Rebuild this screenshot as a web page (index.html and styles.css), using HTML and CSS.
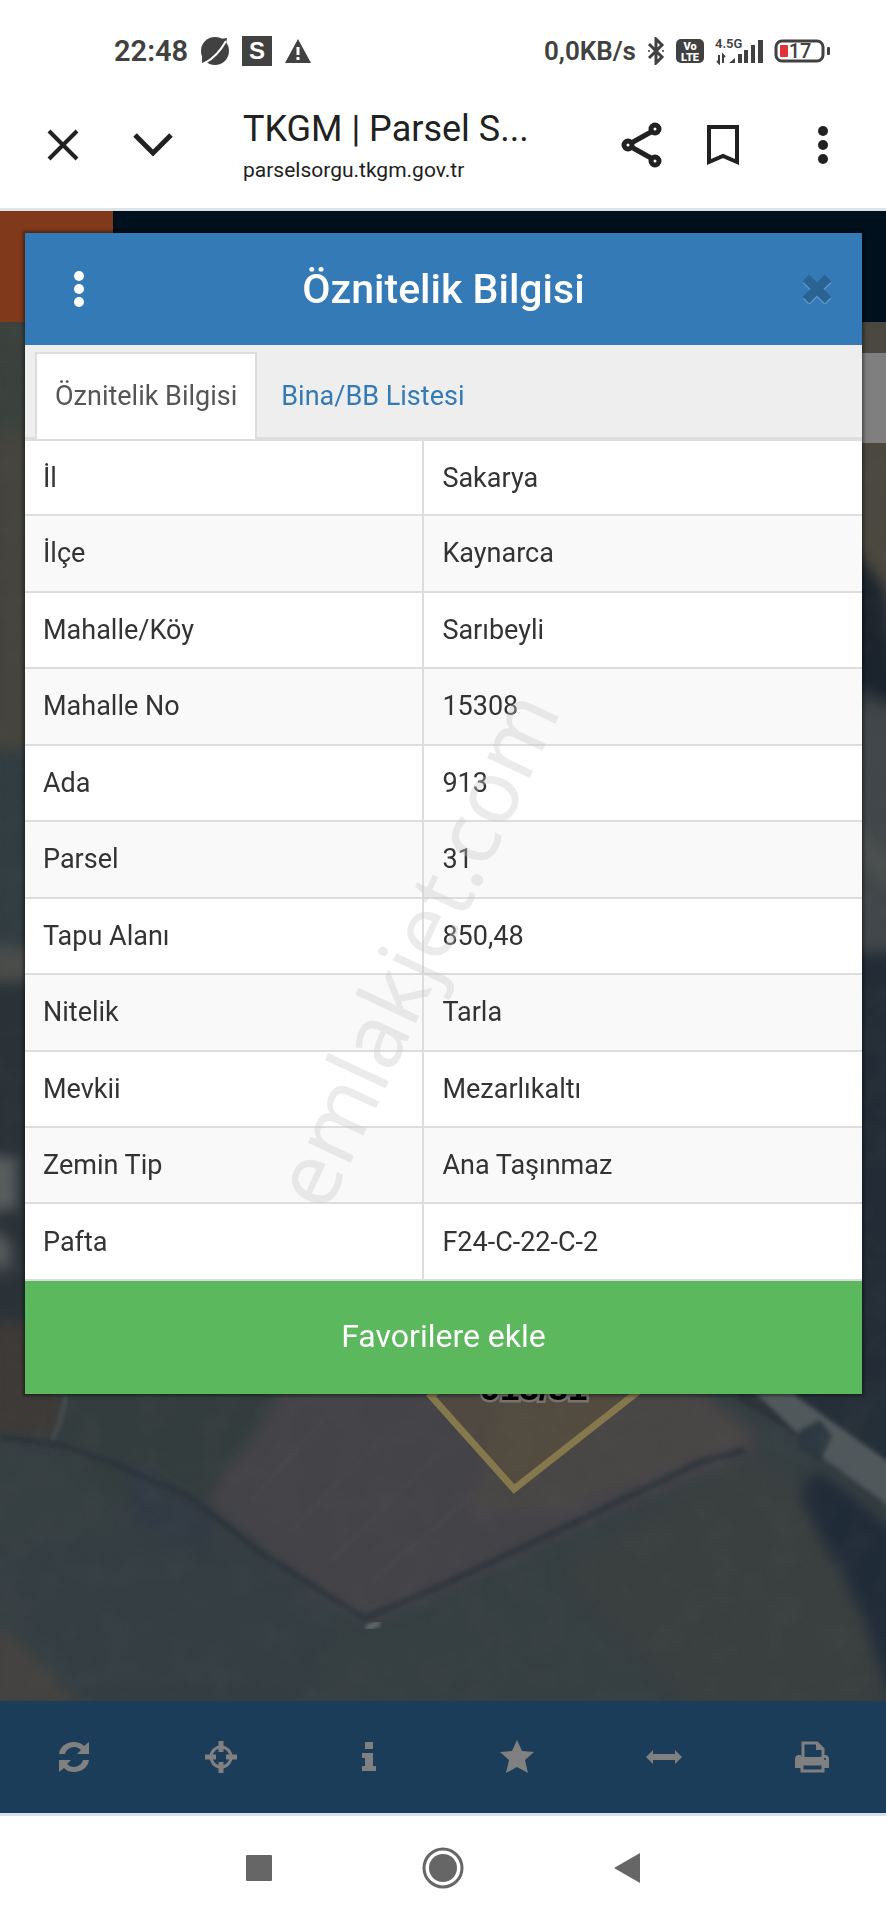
FILE: index.html
```html
<!DOCTYPE html>
<html lang="tr">
<head>
  <meta charset="UTF-8">
  <meta name="viewport" content="width=device-width, initial-scale=1">
  <title>TKGM | Parsel Sorgu</title>
  <link rel="stylesheet" href="styles.css">
</head>
<body>

  <div class="status-bar">
    <div class="status-left">
      <span class="clock">22:48</span>
      <svg width="30" height="30" viewBox="0 0 30 30">
        <circle cx="15" cy="15" r="14" fill="#414141"/>
        <path d="M20 3 27 2 26 9z" fill="#414141"/>
        <path d="M2 20 2 27 8 24z" fill="#414141"/>
        <path d="M5 27C14 22 21 14 26 5" fill="none" stroke="#fff" stroke-width="2"/>
      </svg>
      <svg width="30" height="30" viewBox="0 0 30 30">
        <rect width="30" height="30" fill="#414141"/>
        <text class="app-letter" x="15" y="23" text-anchor="middle">S</text>
      </svg>
      <svg width="28" height="26" viewBox="0 0 28 26">
        <path d="M14 1 27 25H1z" fill="#414141"/>
        <path d="M14 9v8M14 19v3" stroke="#fff" stroke-width="3"/>
      </svg>
    </div>
    <div class="status-right">
      <span class="speed">0,0KB/s</span>
      <svg width="18" height="28" viewBox="0 0 18 28">
        <path d="M2 7 15 20 9 26V2l6 6L2 21" fill="none" stroke="#414141" stroke-width="3"/>
        <circle cx="2" cy="14" r="1" fill="#414141"/>
        <circle cx="16" cy="14" r="1" fill="#414141"/>
      </svg>
      <svg width="28" height="24" viewBox="0 0 28 24">
        <rect width="28" height="24" rx="5" fill="#414141"/>
        <text class="volte" x="14" y="11" text-anchor="middle">Vo</text>
        <text class="volte" x="14" y="22" text-anchor="middle">LTE</text>
      </svg>
      <svg width="48" height="28" viewBox="0 0 48 28">
        <text class="network" x="0" y="11">4.5G</text>
        <path d="M4 18v8l-2-2M8 26v-8l2 2" fill="none" stroke="#414141" stroke-width="2"/>
        <path d="M14 26l6-5v5zM23 17h4v9h-4zM29 13h4v13h-4zM36 8h4v18h-4zM43 3h5v23h-5z" fill="#414141"/>
      </svg>
      <svg width="56" height="24" viewBox="0 0 56 24">
        <rect x="2" y="2" width="47" height="20" rx="6" fill="none" stroke="#414141" stroke-width="3"/>
        <rect x="53" y="8" width="3" height="8" rx="1" fill="#414141"/>
        <rect x="6" y="6" width="8" height="12" rx="1" fill="#e2323a"/>
        <text class="battery" x="26" y="19" text-anchor="middle">17</text>
      </svg>
    </div>
  </div>

  <header class="browser-bar">
    <button type="button" class="icon-btn" aria-label="Kapat">
      <svg width="32" height="32" viewBox="0 0 32 32"><path d="M2 2 30 30M30 2 2 30" stroke="#212121" stroke-width="4"/></svg>
    </button>
    <button type="button" class="icon-btn chevron" aria-label="Küçült">
      <svg width="40" height="24" viewBox="0 0 40 24"><path d="M2 2 20 20 38 2" fill="none" stroke="#212121" stroke-width="5"/></svg>
    </button>
    <div class="page-info">
      <div class="page-title">TKGM | Parsel S...</div>
      <div class="page-url">parselsorgu.tkgm.gov.tr</div>
    </div>
    <button type="button" class="icon-btn share" aria-label="Paylaş">
      <svg width="42" height="46" viewBox="0 0 42 46" fill="none" stroke="#212121" stroke-width="5">
        <path d="M12 20 30 10M12 26 30 36"/>
        <circle cx="7" cy="23" r="4"/><circle cx="34" cy="7" r="4"/><circle cx="34" cy="39" r="4"/>
      </svg>
    </button>
    <button type="button" class="icon-btn bookmark" aria-label="Yer işareti">
      <svg width="32" height="42" viewBox="0 0 32 42"><path d="M2 3H30V38L16 32 2 38z" fill="none" stroke="#212121" stroke-width="4"/></svg>
    </button>
    <button type="button" class="icon-btn" aria-label="Menü">
      <svg width="10" height="38" viewBox="0 0 10 38" fill="#212121"><circle cx="5" cy="5" r="5"/><circle cx="5" cy="19" r="5"/><circle cx="5" cy="33" r="5"/></svg>
    </button>
  </header>

  <main class="page">
    <div class="backdrop">
      <div class="site-header"><div class="site-logo"></div></div>
      <svg class="map" viewBox="0 0 886 1379" preserveAspectRatio="xMidYMin slice">
        <defs>
          <filter id="soft" x="-10%" y="-10%" width="120%" height="120%" color-interpolation-filters="sRGB"><feGaussianBlur stdDeviation="7"/></filter>
          <filter id="edge" x="-10%" y="-10%" width="120%" height="120%" color-interpolation-filters="sRGB"><feGaussianBlur stdDeviation="2"/></filter>
          <filter id="grain" x="0" y="0" width="100%" height="100%" color-interpolation-filters="sRGB">
            <feTurbulence type="fractalNoise" baseFrequency="0.03" numOctaves="4" seed="8"/>
            <feColorMatrix values="0 0 0 0 0.4  0 0 0 0 0.4  0 0 0 0 0.4  1 0 0 0 -0.4"/>
          </filter>
        </defs>
        <rect width="886" height="1379" fill="#363f42"/>

        <!-- left edge -->
        <g filter="url(#soft)">
          <path d="M-10-10H40V120H-10z" fill="#3b423e"/>
          <path d="M-10 110H40V428H-10z" fill="#45443e"/>
          <path d="M-10 428H40V625H-10z" fill="#313d41"/>
          <path d="M-10 625H40V660H-10z" fill="#4b4d4b"/>
          <path d="M-10 660H40V1080H-10z" fill="#2a3237"/>
          <path d="M-10 835H16V888H-10z" fill="#5b5f60"/>
          <path d="M-10 905 10 920V950L-10 940z" fill="#5a5d5e"/>
          <path d="M-10 1000H70L62 1090 52 1116-10 1110z" fill="#3d3a38"/>
        </g>
        <!-- right edge -->
        <g filter="url(#soft)">
          <path d="M850-10H900V300H850z" fill="#4a483f"/>
          <path d="M850 220 886 270 900 390 850 360z" fill="#1b232c"/>
          <path d="M850 390 900 380V640H850z" fill="#41474a"/>
          <path d="M850 500 900 540V580L850 530z" fill="#4c4f4e"/>
          <path d="M850 630H900V1150L850 1100z" fill="#232c36"/>
        </g>

        <!-- fields -->
        <g filter="url(#soft)">
          <path d="M66 1070H300L215 1170 200 1260 60 1120z" fill="#343d3e"/>
          <path d="M290 1060H690L760 1130 600 1195 443 1270 372 1298 330 1280 205 1180z" fill="#444348"/>
          <path d="M500 1072H700L760 1115 560 1190 470 1190z" fill="#494646"/>
          <path d="M740 1135 840 1180 886 1340V1380H690L560 1250z" fill="#3a4040"/>
          <path d="M0 1240C120 1220 200 1190 330 1290L300 1379H80z" fill="#343e43"/>
          <path d="M130 1135 215 1195 205 1240 130 1200z" fill="#323b44"/>
          <path d="M-10 1300 20 1320 85 1390H-10z" fill="#444341"/>
        </g>
        <!-- furrows -->
        <g filter="url(#edge)" fill="none" stroke="#514d4f" stroke-width="3" opacity=".4">
          <path d="M250 1180 330 1090M290 1210 400 1100M330 1240 440 1130M370 1260 500 1150"/>
        </g>
        <!-- ditches -->
        <g filter="url(#edge)" fill="none" stroke="#2b3339" stroke-width="6">
          <path d="M0 1115 60 1123 110 1140 190 1175 260 1230 335 1278 365 1296 443 1263 580 1198 700 1140 745 1128" opacity=".8"/>
          <path d="M740 1072 790 1100 886 1175" stroke-width="14"/>
        </g>
        <path d="M66 1074 60 1100 52 1118" fill="none" stroke="#4f5655" stroke-width="3" filter="url(#edge)"/>
        <path d="M366 1306 380 1301" stroke="#74787b" stroke-width="4" filter="url(#edge)"/>
        <!-- road -->
        <g filter="url(#edge)">
          <path d="M745 1060H790L896 1142V1190L820 1134z" fill="#50585b"/>
          <path d="M800 1108 820 1098 832 1114 820 1140 796 1124z" fill="#2d3840"/>
          <path d="M796 1074 900 1148V1060H796z" fill="#252f38"/>
        </g>
        <path d="M806 1158 822 1150 896 1210V1390L862 1290 800 1175z" fill="#202b38" filter="url(#soft)"/>

        <rect width="886" height="1379" filter="url(#grain)" opacity=".2"/>

        <!-- selected parcel -->
        <path d="M431 1074 514 1167 635 1072 540 980z" fill="#8a6a28" fill-opacity=".16" stroke="#85784c" stroke-width="7"/>
        <text class="parcel-label" x="534" y="1078" text-anchor="middle">913/31</text>
        <rect x="846" y="31" width="40" height="90" fill="#7f7f7f"/>
      </svg>
    </div>

    <section class="dialog" role="dialog" aria-labelledby="dialog-title">
      <div class="dialog-header">
        <button type="button" class="icon-btn dialog-menu" aria-label="Seçenekler">
          <svg width="12" height="38" viewBox="0 0 12 38" fill="#fff"><circle cx="6" cy="6" r="5"/><circle cx="6" cy="19" r="5"/><circle cx="6" cy="32" r="5"/></svg>
        </button>
        <h1 id="dialog-title" class="dialog-title">Öznitelik Bilgisi</h1>
        <button type="button" class="icon-btn dialog-close" aria-label="Kapat">
          <svg width="30" height="30" viewBox="0 0 30 30" fill="none" stroke-width="9">
            <path d="M4 6 26 28M26 6 4 28" stroke="#5c95c7"/>
            <path d="M4 4 26 26M26 4 4 26" stroke="#2a6292"/>
          </svg>
        </button>
      </div>

      <nav class="tabs">
        <a href="#oznitelik" class="tab active">Öznitelik Bilgisi</a>
        <a href="#bina" class="tab">Bina/BB Listesi</a>
      </nav>

      <table class="attributes" id="oznitelik">
        <tbody>
          <tr><th scope="row">İl</th><td>Sakarya</td></tr>
          <tr><th scope="row">İlçe</th><td>Kaynarca</td></tr>
          <tr><th scope="row">Mahalle/Köy</th><td>Sarıbeyli</td></tr>
          <tr><th scope="row">Mahalle No</th><td>15308</td></tr>
          <tr><th scope="row">Ada</th><td>913</td></tr>
          <tr><th scope="row">Parsel</th><td>31</td></tr>
          <tr><th scope="row">Tapu Alanı</th><td>850,48</td></tr>
          <tr><th scope="row">Nitelik</th><td>Tarla</td></tr>
          <tr><th scope="row">Mevkii</th><td>Mezarlıkaltı</td></tr>
          <tr><th scope="row">Zemin Tip</th><td>Ana Taşınmaz</td></tr>
          <tr><th scope="row">Pafta</th><td>F24-C-22-C-2</td></tr>
        </tbody>
      </table>

      <button type="button" class="favorite-btn">Favorilere ekle</button>
      <div class="watermark"><span>emlakjet.com</span></div>
    </section>
  </main>

  <nav class="map-tools">
    <button type="button" class="icon-btn" aria-label="Yenile">
      <svg width="32" height="32" viewBox="0 0 32 32" fill="#808080">
        <path d="M1 13C2 5 9 1 16 1c4 0 7 1 10 4l5-4v12H19l4-4c-2-2-4-3-7-3-4 0-8 3-9 7z"/>
        <path d="M31 19c-1 8-8 12-15 12-4 0-7-1-10-4l-5 4V19h12l-4 4c2 2 4 3 7 3 4 0 8-3 9-7z"/>
      </svg>
    </button>
    <button type="button" class="icon-btn" aria-label="Konumum">
      <svg width="32" height="32" viewBox="0 0 32 32" fill="none" stroke="#808080">
        <circle cx="16" cy="16" r="10" stroke-width="3"/>
        <path d="M16 0v11M16 21v11M0 16h11M21 16h11" stroke-width="5"/>
      </svg>
    </button>
    <button type="button" class="icon-btn" aria-label="Bilgi">
      <svg width="32" height="32" viewBox="0 0 32 32" fill="#808080"><path d="M12 1h8v7h-8zM9 12h11v13h3v5H9v-5h3v-8H9z"/></svg>
    </button>
    <button type="button" class="icon-btn" aria-label="Favoriler">
      <svg width="34" height="34" viewBox="0 0 34 34" fill="#808080"><path d="M17 0l5 11 12 1-9 8 3 13-11-6-11 6 3-13-9-8 12-1z"/></svg>
    </button>
    <button type="button" class="icon-btn" aria-label="Ölçüm">
      <svg width="36" height="32" viewBox="0 0 36 32" fill="#808080"><path d="M0 16 7 9v4h22V9l7 7-7 7v-4H7v4z"/></svg>
    </button>
    <button type="button" class="icon-btn" aria-label="Yazdır">
      <svg width="34" height="32" viewBox="0 0 34 32">
        <path d="M8 17V2h14l6 6v9" fill="none" stroke="#808080" stroke-width="3"/>
        <path d="M21 2v7h7z" fill="#808080"/>
        <path d="M0 27V18q0-4 4-4h2v2h22v-2h2q4 0 4 4v9h-5v-4H6v4z" fill="#808080"/>
        <rect x="7" y="23" width="21" height="7" fill="#1b3d5a" stroke="#808080" stroke-width="3"/>
        <circle cx="30" cy="18" r="1" fill="#1b3d5a"/>
      </svg>
    </button>
  </nav>

  <div class="system-nav">
    <button type="button" class="icon-btn" aria-label="Son uygulamalar">
      <svg width="26" height="26" viewBox="0 0 26 26"><rect width="26" height="26" rx="1" fill="#666"/></svg>
    </button>
    <button type="button" class="icon-btn" aria-label="Ana ekran">
      <svg width="42" height="42" viewBox="0 0 42 42"><circle cx="21" cy="21" r="19" fill="none" stroke="#666" stroke-width="3"/><circle cx="21" cy="21" r="14" fill="#666"/></svg>
    </button>
    <button type="button" class="icon-btn" aria-label="Geri">
      <svg width="26" height="30" viewBox="0 0 26 30"><path d="M0 15 26 0V30z" fill="#666"/></svg>
    </button>
  </div>

</body>
</html>
```

FILE: styles.css
```css
* {
  box-sizing: border-box;
}
body {
  margin: 0;
  min-height: 100vh;
  display: flex;
  flex-direction: column;
  background: #fff;
  color: #333;
  font-family: Roboto, "Noto Sans", sans-serif;
}
svg {
  display: block;
}
.icon-btn {
  display: flex;
  align-items: center;
  justify-content: center;
  padding: 0;
  border: 0;
  background: none;
}

/* status bar */
.status-bar {
  display: flex;
  justify-content: space-between;
  height: 102px;
  padding: 0 56px 0 114px;
  color: #414141;
}
.status-left,
.status-right {
  display: flex;
  align-items: center;
  gap: 12px;
}
.status-right {
  gap: 11px;
}
.clock {
  font-size: 29px;
  font-weight: 600;
}
.speed {
  font-size: 26px;
  font-weight: 600;
}
.app-letter {
  font: bold 24px "Liberation Sans", sans-serif;
  fill: #fff;
}
.volte {
  font-size: 11px;
  font-weight: 900;
  fill: #fff;
}
.network {
  font-size: 13px;
  font-weight: 600;
  fill: #414141;
}
.battery {
  font-size: 20px;
  font-weight: 500;
  fill: #414141;
}

/* browser bar */
.browser-bar {
  display: flex;
  align-items: center;
  height: 109px;
  padding: 0 58px 20px 47px;
  border-bottom: 3px solid #dce4e8;
  color: #212121;
}
.chevron {
  margin-left: 54px;
}
.page-info {
  flex: 1;
  margin-left: 70px;
  padding-top: 4px;
}
.page-title {
  font-size: 36px;
  line-height: 46px;
}
.page-url {
  font-size: 21px;
  line-height: 36px;
}
.bookmark {
  margin: 0 79px 0 44px;
}

/* map page */
.page {
  position: relative;
  flex: 1;
  padding: 22px 24px 40px 25px;
}
.backdrop {
  position: absolute;
  inset: 0;
  display: flex;
  flex-direction: column;
  overflow: hidden;
}
.site-header {
  height: 111px;
  background: #00101c;
}
.site-logo {
  width: 113px;
  height: 100%;
  background: #80391b;
}
.map {
  flex: 1;
  width: 100%;
  min-height: 0;
}
.parcel-label {
  font: bold 35px "Liberation Sans", sans-serif;
  fill: #000;
  stroke: #77736c;
  stroke-width: 5px;
  paint-order: stroke;
}

/* dialog */
.dialog {
  position: relative;
  background: #fff;
  box-shadow: 0 0 3px 2px rgba(0, 0, 0, 0.4);
}
.dialog-header {
  display: flex;
  align-items: center;
  height: 112px;
  padding: 0 30px 0 48px;
  background: #337ab7;
}
.dialog-title {
  flex: 1;
  margin: 0;
  color: #fff;
  font-size: 41px;
  font-weight: 500;
  text-align: center;
}
.tabs {
  display: flex;
  height: 96px;
  padding: 7px 10px 0;
  background: #eee;
  border-bottom: 4px solid #ddd;
}
.tab {
  display: flex;
  align-items: center;
  padding: 0 22px;
  border: 2px solid transparent;
  border-bottom: 0;
  color: #337ab7;
  font-size: 27px;
  text-decoration: none;
}
.tab.active {
  margin-bottom: -2px;
  padding: 0 18px 2px;
  background: #fff;
  border-color: #ddd;
  color: #555;
}
.attributes {
  width: 100%;
  height: 840px;
  border-collapse: collapse;
  table-layout: fixed;
  font-size: 27px;
}
.attributes th,
.attributes td {
  padding: 0 18px;
  border-bottom: 2px solid #ddd;
  font-weight: 400;
  text-align: left;
}
.attributes th {
  width: 47.6%;
  border-right: 2px solid #ddd;
}
.attributes tr:nth-child(even) {
  background: #f9f9f9;
}
.favorite-btn {
  display: block;
  width: 100%;
  height: 113px;
  padding: 0 0 4px;
  border: 0;
  background: #5cb85c;
  color: #fff;
  font-family: inherit;
  font-size: 32px;
}
.watermark {
  position: absolute;
  inset: 382px 60px 113px 0;
  display: flex;
  align-items: center;
  justify-content: center;
  color: rgba(200, 200, 200, 0.36);
  font-family: "Noto Sans", sans-serif;
  font-size: 88px;
  pointer-events: none;
}
.watermark span {
  transform: rotate(-65deg);
}

/* bottom bars */
.map-tools {
  display: grid;
  grid-template-columns: repeat(6, 1fr);
  height: 115px;
  background: #1b3d5a;
  border-bottom: 3px solid #d3e0ec;
}
.system-nav {
  display: flex;
  align-items: center;
  justify-content: center;
  gap: 150px;
  height: 104px;
}
```
